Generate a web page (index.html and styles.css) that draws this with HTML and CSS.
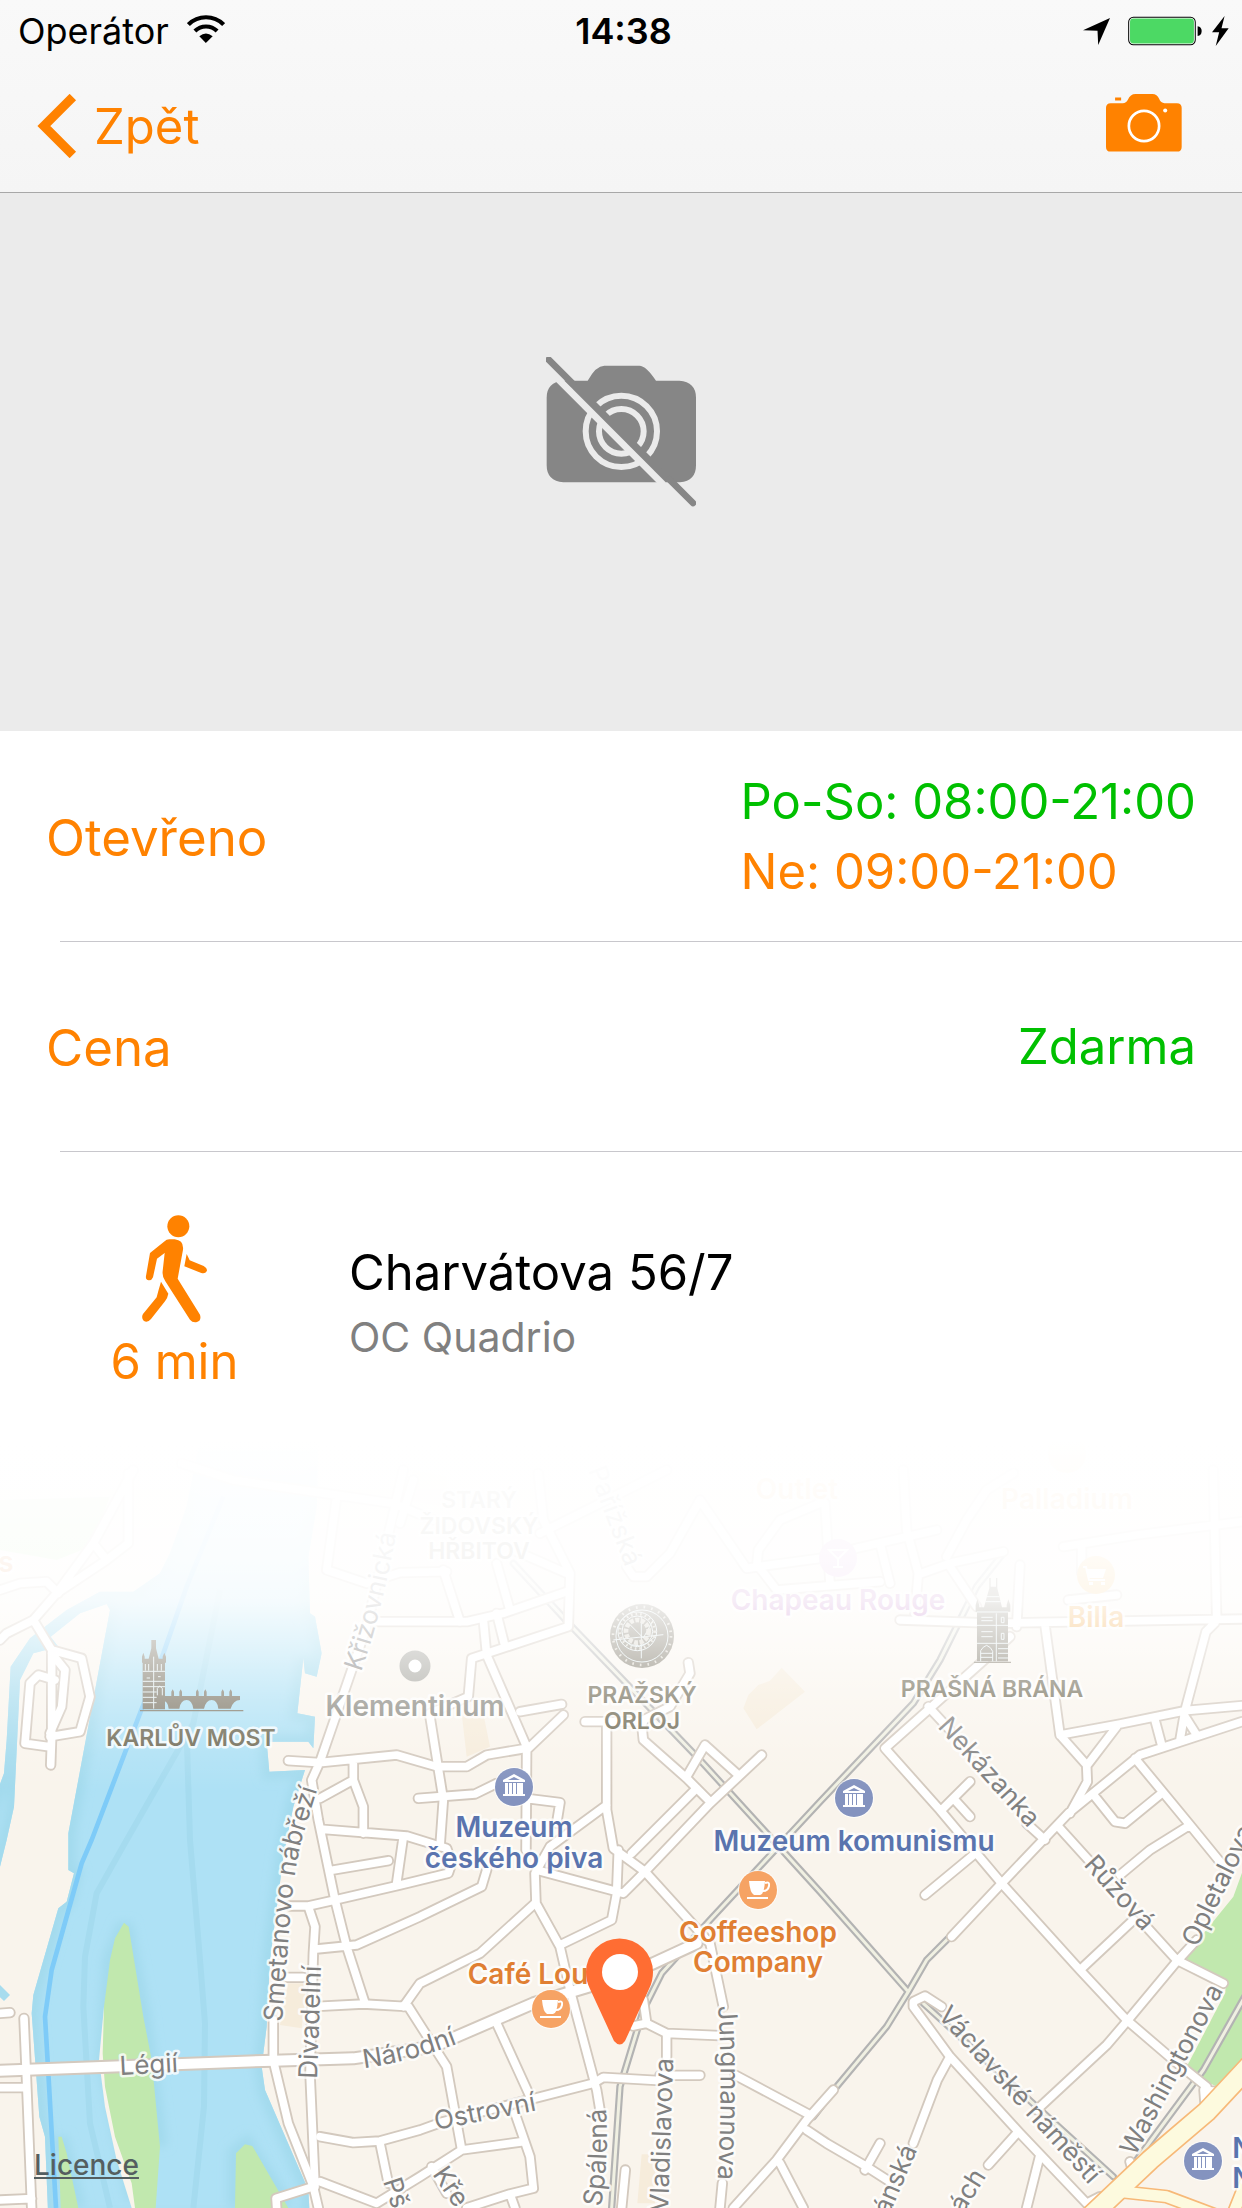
FILE: index.html
```html
<!DOCTYPE html>
<html lang="cs">
<head>
<meta charset="utf-8">
<meta name="viewport" content="width=device-width, initial-scale=1">
<title>Charvátova 56/7</title>
<link rel="stylesheet" href="styles.css">
</head>
<body>
<header class="top">
  <div class="status">
    <div class="status-left">
      <span>Operátor</span>
      <svg class="wifi" width="38" height="28" viewBox="0 0 111 82" aria-hidden="true">
        <g fill="none" stroke="#000" stroke-width="12">
          <path d="M4 28 A73 73 0 0 1 107 28"/>
          <path d="M23 47 A46 46 0 0 1 88 47"/>
        </g>
        <path d="M36 62 Q55 46 75 62 L55 82 Z"/>
      </svg>
    </div>
    <span class="clock">14:38</span>
    <div class="status-right">
      <svg width="27" height="27" viewBox="0 0 80 80" aria-hidden="true"><path d="M80 0 L45 80 L43 38 L0 36 Z"/></svg>
      <svg width="74" height="30" viewBox="0 0 220 88" aria-hidden="true">
        <rect x="2" y="3" width="198" height="82" rx="14" fill="#fff" stroke="#000" stroke-width="3"/>
        <rect x="6" y="7" width="190" height="74" rx="10" fill="#4cd964"/>
        <path d="M207 30 Q219 32 219 44 Q219 57 207 59 Z"/>
      </svg>
      <svg width="17" height="30" viewBox="0 0 50 88" aria-hidden="true"><path d="M37 0 L0 48 L21 48 L11 88 L49 36 L28 36 Z"/></svg>
    </div>
  </div>
  <nav class="nav">
    <button class="back" type="button">
      <svg width="40" height="64" viewBox="0 0 116 190" aria-hidden="true"><path d="M105 9 L19 95 L105 181" fill="none" stroke="#ff8200" stroke-width="27"/></svg>
      <span>Zpět</span>
    </button>
    <button class="camera" type="button" aria-label="Fotoaparát">
      <svg width="76" height="58" viewBox="0 0 226 172" aria-hidden="true">
        <path fill="#ff8200" d="M27 10 h18 v9 h-18 z M14 27 H50 Q60 27 65 17 Q72 0 88 0 H138 Q152 0 158 14 Q163 27 174 27 H211 Q225 27 225 41 V157 Q225 171 211 171 H14 Q0 171 0 157 V41 Q0 27 14 27 Z"/>
        <circle cx="113" cy="95" r="45" fill="none" stroke="#fff" stroke-width="8"/>
        <circle cx="176" cy="49" r="6" fill="#fff"/>
      </svg>
    </button>
  </nav>
</header>

<main>
  <section class="photo" aria-label="Bez fotografie">
    <svg width="150" height="150" viewBox="0 0 450 450" aria-hidden="true">
      <path fill="#868686" d="M52 71 H125 Q150 26 175 26 H280 Q300 26 330 71 H400 Q450 75 450 122 V325 Q450 372 402 376 H52 Q2 372 2 325 V122 Q2 75 52 71 Z"/>
      <g fill="none" stroke="#ebebeb" stroke-width="18">
        <circle cx="226" cy="223" r="107"/><circle cx="226" cy="223" r="67"/>
      </g>
      <path d="M110 112 L340 342" stroke="#868686" stroke-width="24"/>
      <path d="M28 58 L352 383" stroke="#ebebeb" stroke-width="20"/>
      <path d="M8 8 L80 80 M370 367 L441 438" stroke="#868686" stroke-width="20" stroke-linecap="round"/>
    </svg>
  </section>

  <dl class="facts">
    <div class="row">
      <dt>Otevřeno</dt>
      <dd><span class="open">Po-So: 08:00-21:00</span><span class="closed">Ne: 09:00-21:00</span></dd>
    </div>
    <div class="row">
      <dt>Cena</dt>
      <dd><span class="open">Zdarma</span></dd>
    </div>
  </dl>

  <section class="place">
    <div class="walk">
      <svg width="66" height="108" viewBox="0 0 198 324" aria-hidden="true">
        <g fill="#ff8200">
          <circle cx="109" cy="34" r="33"/>
          <path d="M82 73 H98 Q126 76 123 104 L107 191 L174 299 Q179 317 165 321 Q152 324 144 314 L70 199 Q60 186 62 168 L68 114 L45 131 L33 187 Q29 197 20 196 Q10 194 12 183 L24 114 L66 80 Q74 73 82 73 Z"/>
          <path d="M134 117 L143 136 L185 153 Q198 160 194 169 Q190 177 178 174 L127 154 Z"/>
          <path d="M57 200 L79 236 Q77 248 69 259 L27 312 Q16 325 5 317 Q-3 308 3 297 L44 247 Q50 223 57 200 Z"/>
        </g>
      </svg>
      <span>6 min</span>
    </div>
    <div class="address">
      <h1>Charvátova 56/7</h1>
      <p>OC Quadrio</p>
    </div>
  </section>

  <section class="map">
    <svg class="map-canvas" viewBox="0 0 1242 768" role="img" aria-label="Mapa">
      <defs>
        <linearGradient id="fade" x1="0" y1="0" x2="0" y2="1">
          <stop offset="0" stop-color="#fff"/>
          <stop offset=".16" stop-color="#fff" stop-opacity=".97"/>
          <stop offset=".34" stop-color="#fff" stop-opacity=".94"/>
          <stop offset=".46" stop-color="#fff" stop-opacity=".88"/>
          <stop offset=".6" stop-color="#fff" stop-opacity=".62"/>
          <stop offset=".75" stop-color="#fff" stop-opacity=".33"/>
          <stop offset=".9" stop-color="#fff" stop-opacity=".1"/>
          <stop offset="1" stop-color="#fff" stop-opacity="0"/>
        </linearGradient>
        <path id="river" d="M600 0 L560 200 510 340 480 400 400 455 300 455 200 510 90 595 32 680 20 900 12 1000 -40 1140 -40 1290 0 1280 20 1200 42 1100 60 720 100 640 175 620 152 590 240 520 320 492 330 510 205 1180 205 1290 222 1300 200 1385 175 1405 100 1665 95 1720 118 2030 135 2090 145 2340 L930 2340 925 2250 795 1950 785 1880 800 1760 810 1560 850 1250 880 1100 915 990 808 995 800 905 925 905 940 925 945 830 892 820 910 655 915 700 950 710 965 640 945 530 930 520 925 350 950 200 955 0 Z"/>
        <clipPath id="river-clip"><use href="#river"/></clipPath>
        <filter id="soft" x="-10%" y="-10%" width="120%" height="120%"><feGaussianBlur stdDeviation="14"/></filter>
        <g id="streets">
          <path d="M0 450 L60 430 140 425 175 460 M400 90 L280 310 170 460 100 540 20 580 0 600 M385 100 V310 L320 360 170 460 M280 310 L320 360 M100 540 L155 630 245 655 270 770 240 875 150 890 M155 630 V890 L152 975 M165 720 L115 705 90 730 75 910 145 920 M155 640 L195 690 185 800 150 880"/>
          <path d="M545 70 L700 120 1180 190 1300 240 M1210 90 L1180 220 1100 560 960 965 935 1020 955 1140 1005 1380 1040 1520 1095 1690 M1010 170 L980 390 1100 430 1200 398 1340 395 M1120 545 H1400 L1510 520 1700 455 M865 962 L960 968 1190 945 1310 980 H1400 L1460 945 1580 925 M960 1075 L1060 1020 M1060 970 V1020 L1090 1100 V1180 M970 1168 L1220 1188 1340 1225 1355 1270 1345 1300 1200 1335 1005 1380 925 1398 H870 M1255 1075 L1425 1062 1490 1030 M1210 1190 L1190 1330 M1000 1290 L1165 1262 M925 1400 L945 1460 940 1540 930 1900 945 2240 M950 1527 L1070 1515 1260 1430 1445 1340 1460 1290"/>
          <path d="M940 1700 L1090 1692 1225 1700 1340 1880 1385 2130 M1210 1700 L1260 1630 1440 1540 1605 1390 M72 1735 L78 1880 95 2304 M0 1720 L30 1718 M0 1943 H80 M0 2280 L95 2276 M820 1740 L820 1862 865 2050 940 2240 955 2304 M860 1612 H910 M960 2090 L1060 2108 1140 2103 1260 2070 1330 2045 1780 1930 1810 1912 1980 1922 M1980 1906 H2100 M1140 2110 L1165 2230 M940 2240 L828 2275 830 2304 M960 2225 L1130 2290 1260 2210 1385 2130 1570 2105 M1490 1750 L1595 1980 M1545 2020 L1590 2150 1600 2245 1530 2262 1400 2304 M1530 2262 L1545 2304 M1295 2180 L1340 2260"/>
          <path d="M1330 390 L1380 545 M1490 370 L1530 510 M1540 330 L1700 400 M1615 100 L1630 240 1710 400 1705 560 1415 655 1405 770 1290 820 M1200 250 L1240 120 M1450 540 L1460 645 1580 920 1578 1230 M1490 520 L1515 620 M1560 815 L1685 793 M1690 825 L1580 930 M1290 830 L1330 1080 1320 1220 M1578 1075 L1680 1088 1670 1150 M1755 845 H1930 M1820 850 V1110 L1840 1225 1935 1295 2130 1510 2170 1700 M1855 1230 L1850 1360 1835 1440 1680 1515 M1610 1290 L1870 1360 1935 1295 2130 1090 2285 945 M1895 1240 L2090 1045 M1925 850 L1930 900 2060 1015 2130 1085 M2060 1010 L2115 915 2215 1005 M2065 668 L2070 700 2010 800 1930 840 M1820 1095 L1650 1220 1605 1300 1608 1390 1680 1520 1710 1650 1790 1950 1800 2010"/>
          <path d="M1620 280 L1800 190 2000 90 M1880 380 L1900 410 1940 410 2010 340 2100 180 2240 385 2460 355 2570 325 2810 270 M2280 385 L2330 450 2640 425 M2270 380 L2275 330 2340 240 2460 190 M2475 190 L2490 430 M1930 1680 L1940 1750 2000 1780 2160 1787 M1900 1758 L1940 1750 M2000 1780 V1850 M2205 1905 L2430 2025 M2500 1950 L2420 2040 2330 2160 2200 2304 M2420 2070 L2480 2110 2600 2180 2670 2225 M2340 2170 L2410 2304 M2167 2230 L2160 2304 M1876 2190 L1865 2304 M2595 2190 L2640 2110"/>
          <path d="M2700 540 L3000 550 3120 547 3726 537 M2710 90 L2720 270 2755 400 2745 520 M2765 400 L2850 370 3010 335 M2840 350 L2900 240 2960 150 3040 100 M3060 375 L3050 560 M3190 320 L3410 285 3726 245 M3245 320 V400 M3640 90 L3650 530 M2640 310 L2670 430 M2850 380 L2930 500 M3205 480 L3350 465 M3135 555 L3180 885 3260 975 3262 1025 3210 1120 M3180 885 L3360 852 3555 812 3726 797 M3645 548 L3618 575 3555 812 3540 900 M3555 830 L3590 885 M3726 845 L3420 945 3205 1120 3005 1330 2855 1490 M3465 840 L3485 915 M3350 860 L3262 975 M3405 955 L3570 1155 3680 1290 M3485 1060 L3375 1150 3345 1145 3285 1070 M3570 1155 L3450 1230 3360 1305"/>
          <path d="M3030 590 L2930 680 2655 925 2820 1110 3005 1330 3240 1590 3380 1740 3520 1860 3620 1940 M2910 1025 L2830 1105 M2860 1075 L2910 1130 M2785 800 L2850 870 M3080 1150 L3135 1200 M2920 1245 L2775 1365 M3175 1160 L3270 1265 M3430 1450 L3530 1560 3670 1630 M3400 1440 L3240 1590 M3590 1500 L3530 1565 3380 1745 3320 1815 3110 2010 M2825 1700 L2775 1668 2740 1685 2740 1700 2850 1850 3060 2080 3260 2290 3300 2270 M2850 1850 L2812 1920 2740 2110 M3055 2075 L2965 2175 M3120 2145 L3080 2304 M3615 1990 L3612 1950 3650 1955 M3390 2165 L3400 2200"/>
        </g>
        <path id="avenue" d="M0 1892 L820 1862 1060 1855 1300 1820 1600 1690 1800 1630 1960 1570 2090 1510"/>
        <path id="tram" d="M1540 370 L1720 565 2100 960 2310 1190 2460 1355 2725 1655 M3010 340 L2930 440 2820 660 2740 790 2460 1085 2130 1440 1985 1600 1930 1710 1860 1940 1835 2304 M2850 1490 L2780 1560 2725 1655 2660 1760 2510 1940 2440 2030 M3740 1660 L3610 1890 3410 2160 M2770 1690 L3340 2210"/>
        <g id="museum">
          <circle r="20" fill="#fff" opacity=".7"/><circle r="19" fill="#8493bf"/>
          <path fill="#fff" d="M0 -13 L11 -7 V-5 H-11 V-7 Z M-9 -4 h3 V7 h-3 Z M-5 -4 h3 V7 h-3 Z M-1 -4 h3 V7 h-3 Z M3 -4 h3 V7 h-3 Z M6 -4 h3 V7 h-3 Z M-11 7 H11 V9 H-11 Z"/>
          <path fill="#8493bf" d="M0 -10 L6 -7 H-6 Z"/>
        </g>
        <g id="cafe">
          <circle r="20" fill="#fff" opacity=".7"/><circle r="19" fill="#f6a364"/>
          <path fill="#fff" d="M-9 -9 H7 Q6 5 2 5 H-4 Q-8 3 -9 -9 Z M-11 7 H10 V9 H-11 Z"/>
          <path fill="none" stroke="#fff" stroke-width="2" d="M7 -7 Q12 -9 11 -4 Q10 1 5 1"/>
        </g>
        <path id="p-kriz" d="M361 232 Q383 170 397 88"/>
        <path id="p-smet" d="M282 582 L290 480 Q294 425 304 392 L325 325"/>
        <path id="p-jung" d="M718 566 Q724 650 716 768"/>
        <path id="p-narod" d="M364 628 Q412 622 464 601"/>
        <path id="p-spal" d="M601 767 Q611 710 604 650"/>
      </defs>

      <rect width="1242" height="768" fill="#f9f4ec"/>
      <g transform="scale(.33333)">
        <g fill="#f6ecdb">
          <path d="M2345 683 L2415 755 2270 868 2230 805 2245 765 2275 735 2310 722 Z M1385 820 H1450 L1470 920 1400 950 Z M865 1630 H920 L905 1765 840 1755 Z M1925 2143 H1965 V2290 H1912 Z M1240 90 L1340 110 1340 200 1210 180 Z"/>
        </g>
        <path fill="#c1e8ae" d="M0 180 L330 170 270 320 170 360 0 330 Z"/>
        <use href="#river" fill="#aee1f5"/>
        <path fill="#a7dcee" d="M0 1635 L30 1665 12 1683 0 1672 Z"/>
        <g clip-path="url(#river-clip)">
          <use href="#river" fill="none" stroke="#a3daed" stroke-width="46" filter="url(#soft)"/>
          <path fill="none" stroke="#a3daed" stroke-width="46" filter="url(#soft)" d="M375 1450 L330 1560 312 1860 400 2280 M375 1450 L430 1730 480 2120 M180 2090 L235 2304 M705 2304 V2140 L740 2113 860 2300"/>
          <path fill="none" stroke="#a5dbef" stroke-width="18" d="M660 450 L580 850 380 1200 290 1360 255 1550 250 1700 270 2050 330 2304 M560 880 L570 1200 600 1560 615 1750 612 2000 580 2304"/>
        </g>
        <path fill="#f9f4ec" d="M312 1700 L297 1860 315 2000 350 2160 395 2304 H420 Z"/>
        <path fill="#c1e8ae" d="M372 1448 L386 1460 430 1730 455 1860 480 2120 467 2304 H405 L395 2230 345 2090 315 1940 308 1840 312 1700 330 1560 345 1495 Z M175 2090 H185 L200 2140 235 2304 H182 Z M708 2140 L735 2113 757 2118 865 2304 H705 Z M3740 1260 L3700 1370 3550 1555 3680 1620 3675 1660 3560 1880 3610 1920 3660 1945 3740 1870 Z"/>
        <path fill="none" stroke="#7ecbf8" stroke-width="14" d="M670 170 L560 440 490 640 420 820 275 1200 245 1270 155 1590 135 1730 145 1900 168 2304"/>
        <use href="#tram" class="tram-edge"/>
        <use href="#tram" class="tram-core"/>
        <use href="#streets" class="street-edge"/>
        <use href="#avenue" class="avenue-edge"/>
        <use href="#streets" class="street-core"/>
        <use href="#avenue" class="avenue-core"/>
        <path class="highway-edge" d="M3760 1865 L3620 2015 3450 2160 3270 2330"/>
        <path class="ramp-edge" d="M3360 2255 L3500 2270 3660 2330 M3740 2220 L3700 2320"/>
        <path class="ramp-core" d="M3360 2255 L3500 2270 3660 2330 M3740 2220 L3700 2320"/>
        <path class="highway-core" d="M3760 1865 L3620 2015 3450 2160 3270 2330"/>

        <g class="landmark">
          <path d="M428 668 V808 H495 V668 Z M426 668 V650 L430 638 434 650 V656 H446 L454 625 V600 H468 V625 L476 656 H488 V650 L493 638 498 650 V668 Z"/>
          <path d="M470 768 H514 V755 L518 748 522 755 V768 H538 V755 L542 748 546 755 V768 H588 V755 L592 748 596 755 V768 H612 V755 L616 748 620 755 V768 H664 V755 L668 748 672 755 V768 H688 V755 L692 748 696 755 V768 H720 V780 Q700 780 692 806 H655 Q652 780 635 780 Q618 780 612 806 H580 Q576 780 560 780 Q542 780 538 806 H506 Q504 782 488 782 Q478 782 470 806 Z"/>
          <path d="M420 810 H730 V814 H420 Z"/>
          <path class="landmark-cut" d="M428 694 H495 M428 724 H495 M461 650 V806 M436 672 V692 M446 672 V692 M472 672 V692 M484 672 V692 M440 714 H450 M474 710 H482 M428 740 H495 M428 756 H470 M428 772 H470 M428 788 H470 M472 766 V745 L479 738 487 745 V766"/>
          <circle cx="1926" cy="588" r="96"/>
          <g class="landmark-cut"><circle cx="1926" cy="588" r="78"/><circle cx="1912" cy="574" r="58"/><circle cx="1912" cy="574" r="46"/><path d="M1840 600 L1990 584 M1924 530 V655 M1884 548 L1930 594 1960 540 M1870 600 Q1920 640 1965 590"/></g>
          <g fill="none" stroke="#d8d4c8"><circle cx="1926" cy="588" r="87" stroke-width="8" stroke-dasharray="5 18"/><circle cx="1912" cy="574" r="52" stroke-width="8" stroke-dasharray="5 9"/><circle cx="1912" cy="574" r="34" stroke-width="14" stroke-dasharray="12 5"/></g>
          <path d="M2931 664 V515 H2927 V495 L2932 478 2938 495 V502 H2952 L2968 445 V414 H2972 V440 H2988 V414 H2992 V445 L3006 502 H3020 V495 L3025 478 3031 495 V515 H3024 V664 Z M2922 665 H3033 V669 H2922 Z"/>
          <path class="landmark-cut" d="M2931 516 H3024 M2931 556 H3024 M2931 610 H3024 M2989 520 V664 M2944 532 H2978 M2944 542 H2978 M2944 575 H2978 M2944 590 H2978 M3004 532 H3012 V548 H3004 Z M3004 580 H3012 V598 H3004 Z M2942 664 V632 Q2948 620 2960 616 Q2974 622 2978 634 V664 M2942 640 H2978 M2942 652 H2978 M2960 470 H2998 M2956 485 H3002 M2994 626 H3024 M2994 640 H3024 M2994 654 H3024"/>
        </g>
      </g>

      <g class="street-names">
        <text><textPath href="#p-kriz">Křižovnická</textPath></text>
        <text><textPath href="#p-smet">Smetanovo nábřeží</textPath></text>
        <text transform="translate(317 639) rotate(-88)">Divadelní</text>
        <text transform="translate(120 635) rotate(-3)">Légií</text>
        <text><textPath href="#p-narod">Národní</textPath></text>
        <text transform="translate(436 690) rotate(-11)">Ostrovní</text>
        <text><textPath href="#p-spal">Spálená</textPath></text>
        <text transform="translate(668 772) rotate(-88)">Vladislavova</text>
        <text><textPath href="#p-jung">Jungmannova</textPath></text>
        <text transform="translate(432 734) rotate(56)">Kře</text>
        <text transform="translate(383 741) rotate(72)">Pš</text>
        <text transform="translate(889 776) rotate(-67)">ánská</text>
        <text transform="translate(963 774) rotate(-58)">ách</text>
        <text transform="translate(937 287) rotate(48)">Nekázanka</text>
        <text transform="translate(1083 425) rotate(48)">Růžová</text>
        <text transform="translate(1197 508) rotate(-64)">Opletalova</text>
        <text transform="translate(1135 717) rotate(-62)">Washingtonova</text>
        <text transform="translate(937 576) rotate(48)">Václavské náměstí</text>
        <text transform="translate(588 30) rotate(69)">Pařížská</text>
      </g>
      <g class="landmark-names">
        <text x="191" y="306">KARLŮV MOST</text>
        <text x="642" y="263">PRAŽSKÝ</text>
        <text x="642" y="289">ORLOJ</text>
        <text x="992" y="257">PRAŠNÁ BRÁNA</text>
        <text x="479" y="68">STARÝ</text>
        <text x="479" y="94">ŽIDOVSKÝ</text>
        <text x="479" y="119">HŘBITOV</text>
      </g>
      <g class="poi-names">
        <text class="grey" x="415" y="276">Klementinum</text>
        <text class="blue" x="514" y="397">Muzeum</text>
        <text class="blue" x="514" y="428">českého piva</text>
        <text class="blue" x="854" y="411">Muzeum komunismu</text>
        <text class="orange" x="758" y="502">Coffeeshop</text>
        <text class="orange" x="758" y="532">Company</text>
        <text class="orange" x="528" y="544">Café Lou</text>
        <text class="purple" x="838" y="170">Chapeau Rouge</text>
        <text class="yellow" x="1096" y="187">Billa</text>
        <text class="yellow" x="797" y="59">Outlet</text>
        <text class="yellow" x="1067" y="69">Palladium</text>
        <text class="orange" x="6" y="132">s</text>
        <text class="blue" x="1243" y="718">N</text>
        <text class="blue" x="1243" y="748">N</text>
      </g>
      <use href="#museum" x="514" y="347"/>
      <use href="#museum" x="854" y="358"/>
      <use href="#museum" x="1203" y="721"/>
      <use href="#cafe" x="758" y="450"/>
      <use href="#cafe" x="551" y="569"/>
      <circle cx="415" cy="226" r="11" fill="#fff" stroke="#a3a29b" stroke-width="9"/>
      <circle cx="838" cy="118" r="19" fill="#d9a0dc"/>
      <path d="M829 110 H847 L838 119 Z M838 119 V127 M833 127 H843" fill="none" stroke="#fff" stroke-width="2"/>
      <circle cx="1096" cy="135" r="19" fill="#f8bf60"/>
      <path d="M1086 129 H1106 L1103 138 H1088 Z M1089 142 h4 v3 h-4 z M1101 142 h4 v3 h-4 z" fill="#fff"/>
      <path d="M1083 127 H1086 L1089 140 H1105" fill="none" stroke="#fff" stroke-width="2"/>
      <circle cx="1067" cy="14" r="19" fill="#f8bf60"/>
      <rect width="1242" height="350" fill="url(#fade)"/>
      <path fill="#ff6d33" d="M586 532 A33 33 0 0 1 653 532 Q653 541 649 549 L625 601 Q620 608 614 601 L590 549 Q586 541 586 532 Z"/>
      <circle cx="620" cy="532" r="18" fill="#fff"/>
    </svg>
    <a class="licence" href="#licence">Licence</a>
  </section>
</main>
</body>
</html>
```
FILE: styles.css
```css
* { box-sizing: border-box; }

body {
  margin: 0;
  background: #fff;
  color: #000;
  font-family: Inter, "Liberation Sans", sans-serif;
}

button {
  border: 0;
  padding: 0;
  background: none;
  font: inherit;
  color: inherit;
}

svg { display: block; }

.top {
  background: linear-gradient(#f9f9f9, #f5f5f5);
  border-bottom: 1px solid #a8a8a8;
}

.status {
  display: grid;
  grid-template-columns: 1fr auto 1fr;
  align-items: center;
  height: 62px;
  padding: 0 13px 0 18px;
  font-size: 36px;
}

.status-left,
.status-right {
  display: flex;
  align-items: center;
}

.status-left { gap: 18px; }
.status-right { gap: 10px; justify-content: flex-end; }
.status-right svg:first-child { margin-right: 8px; }
.wifi { margin-bottom: 4px; }
.clock { font-weight: 600; }

.nav {
  display: flex;
  justify-content: space-between;
  align-items: center;
  height: 130px;
  padding: 0 60px 2px 37px;
}

.back {
  display: flex;
  align-items: center;
  gap: 17px;
  color: #ff8200;
  font-size: 49px;
}

.camera { margin-bottom: 6px; }

.photo {
  display: flex;
  justify-content: center;
  height: 538px;
  padding-top: 164px;
  background: #ebebeb;
}

.facts { margin: 0; }

.row {
  position: relative;
  display: flex;
  justify-content: space-between;
  align-items: center;
  height: 210px;
  padding: 2px 46px 0;
  color: #ff8200;
}

.row::after {
  content: "";
  position: absolute;
  left: 60px;
  right: 0;
  bottom: -1px;
  height: 1px;
  background: #c8c7cc;
}

dt { font-size: 51px; }

dd {
  display: flex;
  flex-direction: column;
  margin: 0;
  font-size: 49px;
  line-height: 70px;
}

.open { color: #00c000; }

.place {
  display: flex;
  height: 289px;
  padding-top: 64px;
}

.walk {
  display: flex;
  flex-direction: column;
  align-items: center;
  width: 349px;
  color: #ff8200;
  font-size: 49px;
  line-height: 78px;
}

.address h1 {
  margin: 0;
  padding-top: 22px;
  font-size: 49px;
  font-weight: 400;
  line-height: 72px;
}

.address p {
  margin: 0;
  color: #808080;
  font-size: 41px;
  line-height: 56px;
}

.map { position: relative; }
.map-canvas { width: 100%; height: auto; }

.street-edge, .street-core, .avenue-edge, .avenue-core, .tram-edge, .tram-core,
.highway-edge, .highway-core, .ramp-edge, .ramp-core {
  fill: none;
  stroke-linejoin: round;
  stroke-linecap: round;
}

.street-edge { stroke: #d3c9be; stroke-width: 34; }
.street-core { stroke: #fff; stroke-width: 23; }
.avenue-edge { stroke: #d3c9be; stroke-width: 42; }
.avenue-core { stroke: #fff; stroke-width: 30; }
.tram-edge { stroke: #b3b3b3; stroke-width: 22; }
.tram-core { stroke: #f0f0e2; stroke-width: 9; }
.highway-edge { stroke: #f7b978; stroke-width: 66; }
.highway-core { stroke: #fdfade; stroke-width: 56; }
.ramp-edge { stroke: #f7b978; stroke-width: 42; }
.ramp-core { stroke: #fdfade; stroke-width: 32; }

.landmark {
  fill: #7d7767;
  stroke: none;
}

.landmark-cut {
  fill: none;
  stroke: #e4f0f2;
  stroke-width: 3;
}

.street-names text,
.landmark-names text,
.poi-names text {
  paint-order: stroke;
  stroke: #fff;
  stroke-opacity: .8;
  stroke-width: 5px;
  stroke-linejoin: round;
}

.street-names { fill: #808080; font-size: 26px; }

.landmark-names {
  fill: #6f6a55;
  font-size: 23px;
  font-weight: 600;
  text-anchor: middle;
}

.poi-names {
  font-size: 28px;
  font-weight: 600;
  text-anchor: middle;
}

.grey { fill: #8a8981; }
.blue { fill: #5a74ae; }
.orange { fill: #e07f33; }
.purple { fill: #b76bbd; }
.yellow { fill: #f0a23a; }

.licence {
  position: absolute;
  left: 34px;
  bottom: 27px;
  color: #555f60;
  font-size: 28px;
  font-weight: 500;
  line-height: 32px;
}
```
